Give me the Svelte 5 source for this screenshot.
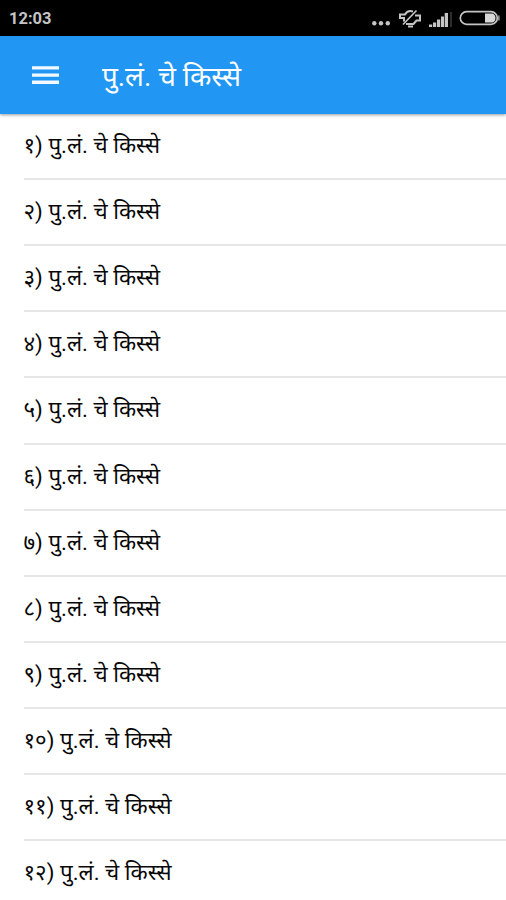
<script lang="ts">
  const title = 'पु.लं. चे किस्से';
  const numerals = ['१', '२', '३', '४', '५', '६', '७', '८', '९', '१०', '११', '१२'];
</script>

<div class="screen">
  <header class="status">
    <span class="time">12:03</span>
    <svg class="status-icons" width="130" height="24" viewBox="0 0 130 24" fill="#c4c4c4">
      <!-- notifications overflow -->
      <circle cx="4.3" cy="17.3" r="2.2" />
      <circle cx="11" cy="17.3" r="2.2" />
      <circle cx="17.8" cy="17.3" r="2.2" />

      <!-- muted bell -->
      <g fill="none" stroke="#c4c4c4" stroke-width="2">
        <path d="M43 5.500c-3-1-6-.5-8 3H30v3.500h4v3.500M46 8.500v1h4v5h-3.500l-3 3.500H36M38 20.500h5" />
        <path d="M33 18.500L46.500 4.500" stroke-width="1.700" />
      </g>

      <!-- signal -->
      <path d="M59 18.500h3.200V21H59zM63 16.500h3.200V21H63zM67 13.500h3.200V21H67zM71 10.500h3V21h-3zM74.700 7H78v14h-3.300z" />
      <path d="M80 6h2v15h-2z" fill="#2c2c2c" />

      <!-- battery -->
      <rect x="90.300" y="5.700" width="37" height="12.600" rx="6.300" fill="none" stroke="#c4c4c4" stroke-width="1.700" />
      <path d="M115 7.500h7.500q3 1 3 4.500t-3 4.500H115z" fill="#d8d8d8" />
      <path d="M128.300 9.500h1.200v5h-1.200z" />
    </svg>
  </header>

  <div class="toolbar">
    <button class="menu" aria-label="Menu">
      <svg width="27" height="18" viewBox="0 0 27 18" fill="#f2faff">
        <path d="M0 .2h27v3.300H0zM0 7.400h27v3.400H0zM0 14.500h27v3.400H0z" />
      </svg>
    </button>
    <h1>{title}</h1>
  </div>

  <ul class="list">
    {#each numerals as n}
      <li>{n}) {title}</li>
    {/each}
  </ul>
</div>

<style>
  .screen {
    height: 900px;
    overflow: hidden;
    display: flex;
    flex-direction: column;
    background: #fff;
    font-family: Roboto, "Noto Sans", "Noto Sans Devanagari", sans-serif;
  }

  .status {
    height: 36px;
    flex: none;
    display: flex;
    align-items: center;
    justify-content: space-between;
    padding: 0 6px 0 9px;
    background: #000;
    color: #c4c4c4;
  }

  .time {
    font-size: 16.5px;
    font-weight: 700;
    padding-top: 1px;
  }

  .toolbar {
    height: 78px;
    flex: none;
    display: flex;
    align-items: center;
    padding-left: 32px;
    background: #2196f3;
    box-shadow: 0 1px 3px rgba(0, 0, 0, 0.4);
    z-index: 1;
  }

  .menu {
    padding: 0;
    border: none;
    background: none;
  }

  .menu svg {
    display: block;
  }

  h1 {
    margin: 0 0 0 43px;
    font-size: 27.8px;
    font-weight: 400;
    color: #fff;
    white-space: nowrap;
  }

  .list {
    margin: 0;
    padding: 0 0 0 23.5px;
    list-style: none;
  }

  li {
    height: 66.12px;
    box-sizing: border-box;
    border-bottom: 2px solid #e6e6e6;
    line-height: 63px;
    font-size: 22.3px;
    color: #080808;
  }
</style>
